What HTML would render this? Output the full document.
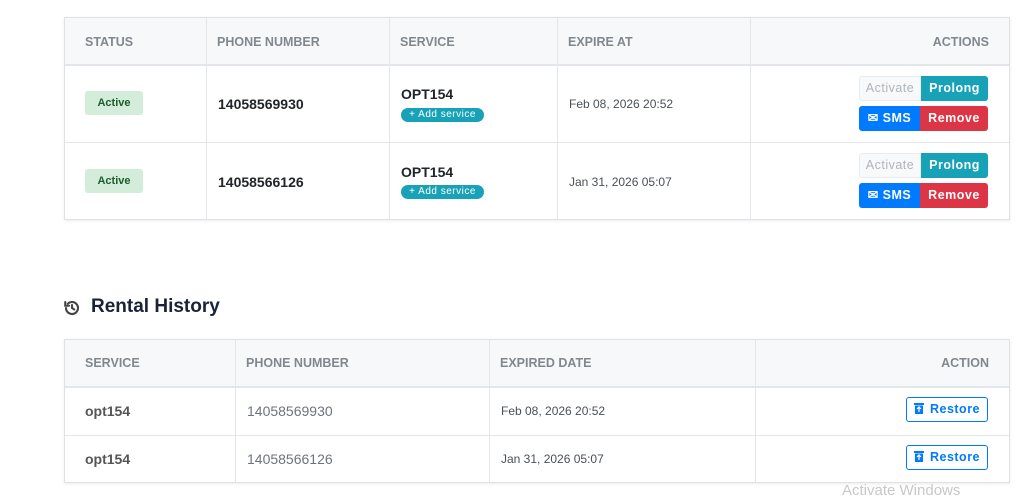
<!DOCTYPE html>
<html><head><meta charset="utf-8"><style>
*{box-sizing:border-box;margin:0;padding:0}
body{width:1024px;height:493px;background:#fff;font-family:"Liberation Sans",sans-serif;position:relative;overflow:hidden;color:#333}
.a{position:absolute}
.tbl{position:absolute;border:1px solid #dee2e6;box-shadow:0 1px 3px rgba(0,0,0,.08)}
.hd{position:absolute;left:0;right:0;top:0;background:#f7f8fa;border-bottom:2px solid #e3e6ea}
.vl{position:absolute;top:0;bottom:0;width:1px;background:#e3e6ea}
.hl{position:absolute;left:0;right:0;height:1px;background:#e3e6ea}
.th{position:absolute;font-size:12.5px;color:#6c757d;font-weight:bold;opacity:.85}
.badge{position:absolute;background:#d4edda;color:#1e5c2d;font-size:11px;font-weight:bold;border-radius:3px;width:58px;height:24px;line-height:24px;text-align:center}
.ph{position:absolute;font-size:14px;font-weight:bold;color:#212529}
.svc{position:absolute;font-size:14px;font-weight:bold;color:#212529}
.add{position:absolute;background:#17a2b8;color:#fff;font-size:10px;border-radius:8px;height:14px;line-height:14px;width:83px;text-align:center;letter-spacing:.5px}
.dt{position:absolute;font-size:12px;color:#495057}
.btn{position:absolute;font-size:12.5px;font-weight:bold;text-align:center;color:#fff;height:25px;line-height:25px;letter-spacing:.5px}
</style></head><body>
<div class="tbl" style="left:64px;top:17px;width:946px;height:203px">
<div class="hd" style="height:48px"></div>
<div class="vl" style="left:141px"></div><div class="vl" style="left:324px"></div><div class="vl" style="left:492px"></div><div class="vl" style="left:685px"></div>
<div class="hl" style="top:124px"></div>
<div class="th" style="left:20px;top:17px">STATUS</div>
<div class="th" style="left:152px;top:17px">PHONE NUMBER</div>
<div class="th" style="left:335px;top:17px">SERVICE</div>
<div class="th" style="left:503px;top:17px">EXPIRE AT</div>
<div class="th" style="right:20px;top:17px">ACTIONS</div>
</div>
<div class="badge" style="left:85px;top:91px">Active</div>
<div class="badge" style="left:85px;top:169px">Active</div>
<div class="ph" style="left:218px;top:96px">14058569930</div>
<div class="ph" style="left:218px;top:174px">14058566126</div>
<div class="svc" style="left:401px;top:86px">OPT154</div>
<div class="add" style="left:401px;top:108px">+ Add service</div>
<div class="svc" style="left:401px;top:164px">OPT154</div>
<div class="add" style="left:401px;top:185px">+ Add service</div>
<div class="dt" style="left:569px;top:97px">Feb 08, 2026 20:52</div>
<div class="dt" style="left:569px;top:175px">Jan 31, 2026 05:07</div>

<div class="btn" style="left:859px;top:76px;width:62px;background:#f8f9fa;color:#adb5bd;font-weight:normal;border:1px solid #e9ecef;border-radius:3px 0 0 3px;line-height:23px">Activate</div>
<div class="btn" style="left:921px;top:76px;width:67px;background:#17a2b8;border-radius:0 3px 3px 0">Prolong</div>
<div class="btn" style="left:859px;top:106px;width:61px;background:#007bff;border-radius:3px 0 0 3px">✉ SMS</div>
<div class="btn" style="left:920px;top:106px;width:68px;background:#dc3545;border-radius:0 3px 3px 0">Remove</div>
<div class="btn" style="left:859px;top:153px;width:62px;background:#f8f9fa;color:#adb5bd;font-weight:normal;border:1px solid #e9ecef;border-radius:3px 0 0 3px;line-height:23px">Activate</div>
<div class="btn" style="left:921px;top:153px;width:67px;background:#17a2b8;border-radius:0 3px 3px 0">Prolong</div>
<div class="btn" style="left:859px;top:183px;width:61px;background:#007bff;border-radius:3px 0 0 3px">✉ SMS</div>
<div class="btn" style="left:920px;top:183px;width:68px;background:#dc3545;border-radius:0 3px 3px 0">Remove</div>

<svg class="a" style="left:63px;top:299px" width="18" height="18" viewBox="0 0 24 24" fill="none" stroke="#444" stroke-width="2.8" stroke-linecap="round"><path d="M4 12a8 8 0 1 0 2.4-5.7"/><path d="M3 4v5h5"/><path d="M12 8v4l3 2"/></svg>
<div class="a" style="left:91px;top:296px;font-size:19px;font-weight:bold;color:#1a2238">Rental History</div>

<div class="tbl" style="left:64px;top:339px;width:946px;height:144px">
<div class="hd" style="height:48px"></div>
<div class="vl" style="left:170px"></div><div class="vl" style="left:424px"></div><div class="vl" style="left:690px"></div>
<div class="hl" style="top:95px"></div>
<div class="th" style="left:20px;top:16px">SERVICE</div>
<div class="th" style="left:181px;top:16px">PHONE NUMBER</div>
<div class="th" style="left:435px;top:16px">EXPIRED DATE</div>
<div class="th" style="right:20px;top:16px">ACTION</div>
</div>
<div class="a" style="left:85px;top:403px;font-size:14px;font-weight:bold;color:#555">opt154</div>
<div class="a" style="left:85px;top:451px;font-size:14px;font-weight:bold;color:#555">opt154</div>
<div class="a" style="left:247px;top:403px;font-size:14px;color:#6c757d">14058569930</div>
<div class="a" style="left:247px;top:451px;font-size:14px;color:#6c757d">14058566126</div>
<div class="dt" style="left:501px;top:404px">Feb 08, 2026 20:52</div>
<div class="dt" style="left:501px;top:452px">Jan 31, 2026 05:07</div>
<div class="btn" style="left:906px;top:397px;width:82px;border:1px solid #007bff;color:#007bff;border-radius:3px;line-height:23px"><svg width="10" height="12" viewBox="0 0 10 12" style="vertical-align:-1px;margin-right:6px"><rect x="0" y="1" width="10" height="2" fill="#007bff"/><rect x="1" y="3.5" width="8" height="8.5" fill="#007bff"/><path d="M5 5v5M3 7l2-2 2 2" stroke="#fff" stroke-width="1.2" fill="none"/></svg>Restore</div>
<div class="btn" style="left:906px;top:445px;width:82px;border:1px solid #007bff;color:#007bff;border-radius:3px;line-height:23px"><svg width="10" height="12" viewBox="0 0 10 12" style="vertical-align:-1px;margin-right:6px"><rect x="0" y="1" width="10" height="2" fill="#007bff"/><rect x="1" y="3.5" width="8" height="8.5" fill="#007bff"/><path d="M5 5v5M3 7l2-2 2 2" stroke="#fff" stroke-width="1.2" fill="none"/></svg>Restore</div>
<div class="a" style="left:842px;top:482px;font-size:15px;color:#c8c8c8">Activate Windows</div>
</body></html>
